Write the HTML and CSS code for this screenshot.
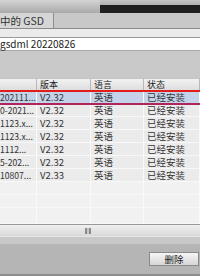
FILE: index.html
```html
<!DOCTYPE html>
<html>
<head>
<meta charset="utf-8">
<link rel="stylesheet" href="styles.css">
</head>
<body>
<div class="topbar"><div class="top-left"></div><div class="top-right"></div></div>
<div class="tabrow"><div class="tab">中的 GSD</div></div>
<div class="strip"></div>
<div class="path">gsdml 20220826</div>
<div class="gap"></div>
<div class="table">
  <div class="row head"><div class="c">&nbsp;</div><div class="c">版本</div><div class="c">语言</div><div class="c">状态</div></div>
  <div class="row sel"><div class="c">202111...</div><div class="c">V2.32</div><div class="c">英语</div><div class="c">已经安装</div></div>
  <div class="row"><div class="c">0-2021...</div><div class="c">V2.32</div><div class="c">英语</div><div class="c">已经安装</div></div>
  <div class="row"><div class="c">1123.x...</div><div class="c">V2.32</div><div class="c">英语</div><div class="c">已经安装</div></div>
  <div class="row"><div class="c">1123.x...</div><div class="c">V2.32</div><div class="c">英语</div><div class="c">已经安装</div></div>
  <div class="row"><div class="c">1112...</div><div class="c">V2.32</div><div class="c">英语</div><div class="c">已经安装</div></div>
  <div class="row"><div class="c">5-202...</div><div class="c">V2.32</div><div class="c">英语</div><div class="c">已经安装</div></div>
  <div class="row"><div class="c">10807...</div><div class="c">V2.33</div><div class="c">英语</div><div class="c">已经安装</div></div>
  <div class="row empty"><div class="c"></div><div class="c"></div><div class="c"></div><div class="c"></div></div>
  <div class="row empty"><div class="c"></div><div class="c"></div><div class="c"></div><div class="c"></div></div>
  <div class="row empty last"><div class="c"></div><div class="c"></div><div class="c"></div><div class="c"></div></div>
  <div class="redbox"></div>
</div>
<div class="hbar"><span class="grip"></span></div>
<div class="band"></div>
<div class="footer"><div class="btn">删除</div></div>
<div class="bottom"></div>
</body>
</html>
```
FILE: styles.css
```css
html, body {
  margin: 0;
  padding: 0;
}
body {
  width: 200px;
  height: 276px;
  overflow: hidden;
  background: #b4b4b4;
  font-family: "Noto Sans CJK SC", "Liberation Sans", sans-serif;
  font-size: 10px;
  color: #2a2a2a;
}
.topbar {
  display: flex;
  height: 13px;
}
.top-left {
  width: 100px;
  background: linear-gradient(#d4d4d4, #a9a9a9);
}
.top-right {
  flex: 1;
  background: linear-gradient(#c4c4c4 0, #b0b0b0 5px, #1e1e1e 5px, #222 13px);
}
.tabrow {
  height: 15px;
  background: #c8c8c8;
  display: flex;
}
.tab {
  width: 53px;
  background: #d6d6d6;
  border-right: 1px solid #8e8e8e;
  line-height: 15px;
  font-size: 10.5px;
  color: #333;
  white-space: nowrap;
  overflow: hidden;
}
.strip {
  height: 8px;
  background: #ebebeb;
  border-top: 1px solid #8c8c8c;
  border-bottom: 1px solid #9a9a9a;
}
.path {
  height: 12px;
  line-height: 12px;
  background: #fff;
  border-bottom: 1px solid #a8a8a8;
  font-size: 10px;
  color: #222;
  white-space: nowrap;
}
.gap {
  height: 27px;
  background: #c9c9c9;
}
.table {
  position: relative;
  background: #f2f2f2;
}
.row {
  display: grid;
  grid-template-columns: 37px 54px 53px 1fr;
  height: 13px;
  border-bottom: 1px solid #f8f8f8;
  box-sizing: border-box;
  background: #ebebeb;
}
.row .c {
  border-right: 1px solid #fafafa;
  line-height: 12px;
  padding-left: 3px;
  white-space: nowrap;
  overflow: hidden;
  font-size: 9.5px;
  color: #333;
}
.row .c:first-child {
  padding-left: 0;
  font-size: 8.6px;
}
.head {
  background: linear-gradient(#f2f2f2, #dedede);
  border-bottom: 1px solid #b4b4b4;
  border-top: 1px solid #c4c4c4;
}
.head .c {
  border-right: 1px solid #b8b8b8;
  line-height: 11px;
  font-size: 9px;
  overflow: visible;
  color: #222;
}
.sel {
  background: #c5d3ea;
}
.empty {
  background: #f1f1f1;
}
.last {
  height: 16px;
}
.redbox {
  position: absolute;
  left: -2px;
  right: -2px;
  top: 12px;
  height: 11px;
  border: 2px solid #e41b1b;
  border-bottom-color: #b0245a;
}
.hbar {
  height: 11px;
  border-top: 1px solid #9a9a9a;
  background: linear-gradient(#efefef, #d9d9d9);
  display: flex;
  align-items: center;
  padding-left: 85px;
}
.grip {
  width: 6px;
  height: 6px;
  background: linear-gradient(90deg, #8a8a8a 0 2px, #c8c8c8 2px 4px, #8a8a8a 4px 6px);
}
.band {
  height: 7px;
  background: #c8c8c8;
  border-top: 1px solid #e6e6e6;
}
.footer {
  height: 30px;
  background: #b5b5b5;
  display: flex;
  justify-content: flex-end;
  align-items: center;
}
.btn {
  width: 48px;
  height: 12px;
  margin-right: 1px;
  border: 1px solid #8a8a8a;
  background: linear-gradient(#f6f6f6, #d6d6d6);
  text-align: center;
  line-height: 12px;
  font-size: 9.5px;
  color: #222;
}
.bottom {
  height: 3px;
  background: #8e8e8e;
}
```
